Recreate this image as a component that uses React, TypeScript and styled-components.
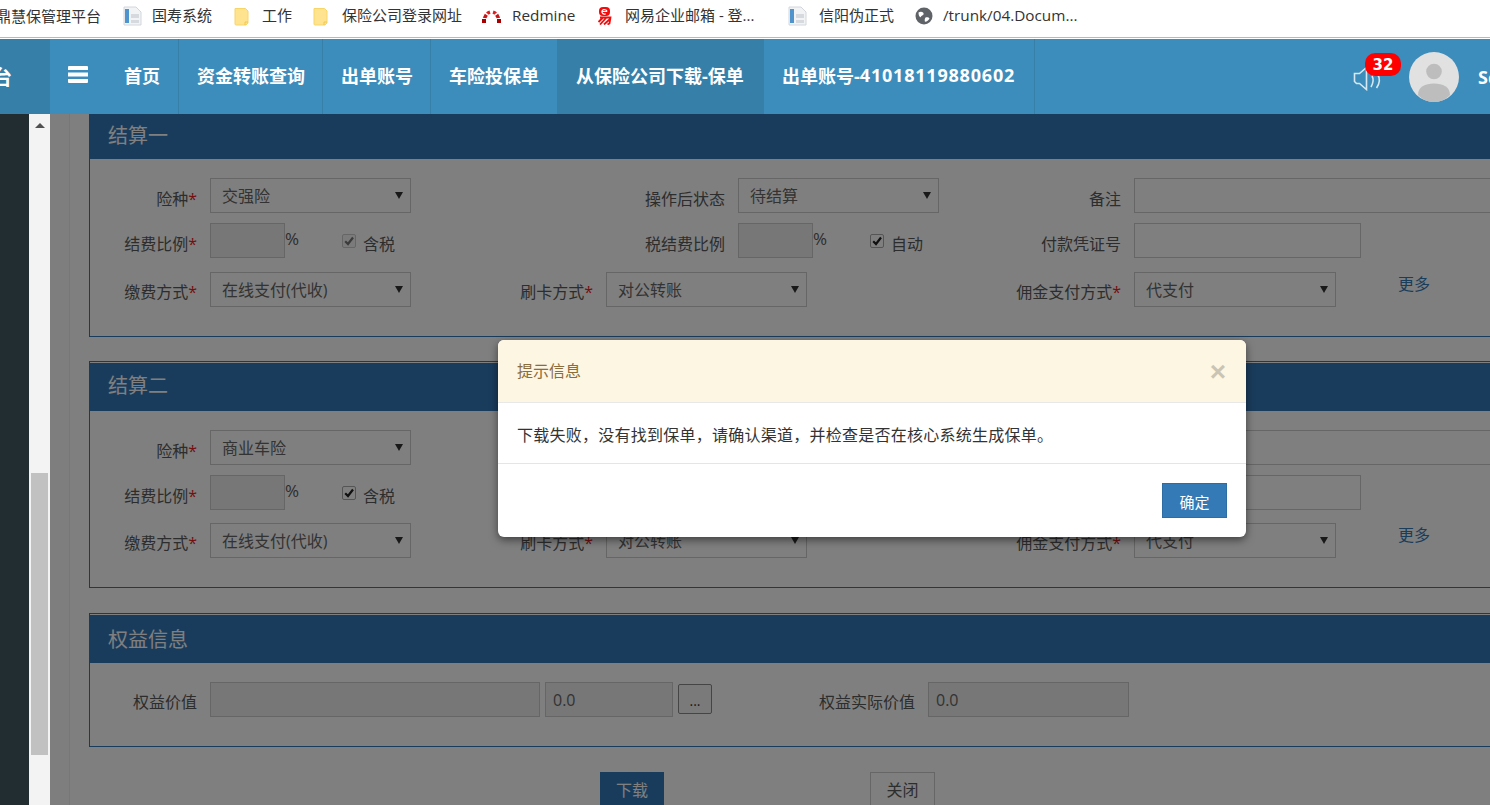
import React from "react";
import styled, { createGlobalStyle } from "styled-components";

const FONT = `"Open Sans", "Noto Sans CJK SC", sans-serif`;

const Global = createGlobalStyle`
  html, body { margin: 0; padding: 0; background: #fff; overflow: hidden; }
  * { box-sizing: border-box; }
  body { font-family: ${FONT}; }
`;

const Page = styled.div`
  width: 1490px;
  height: 805px;
  overflow: hidden;
  display: flex;
  flex-direction: column;
`;

/* Bookmarks */
const BookmarkBar = styled.div`
  height: 39px;
  flex: none;
  display: flex;
  align-items: center;
  padding: 0 0 7px 0;
  margin-left: -4px;
  background: #fff;
  position: relative;
  &::after {
    content: "";
    position: absolute;
    left: 0;
    right: 0;
    bottom: 1px;
    height: 1px;
    background: #b9b9b9;
  }
`;
const Bookmark = styled.div<{ $ml: number; $gap: number }>`
  display: flex;
  align-items: center;
  flex: none;
  margin-left: ${(p) => p.$ml}px;
  gap: ${(p) => p.$gap}px;
  color: #333;
  line-height: 20px;
  white-space: nowrap;
`;
const BookmarkText = styled.span<{ $w: number; $latin?: boolean }>`
  width: ${(p) => p.$w}px;
  display: block;
  overflow: hidden;
  white-space: nowrap;
  padding-bottom: 2px;
  font-size: ${(p) => (p.$latin ? 15.3 : 15)}px;
  color: #333;
`;

const DocIcon = () => (
  <svg width="20" height="20" viewBox="0 0 20 20">
    <path d="M1 1h12l5 5v13H1z" fill="#f1f3f5" stroke="#d2d6dc" strokeWidth="1" />
    <rect x="2" y="3" width="4" height="14" fill="#4f94cc" />
    <rect x="8" y="8" width="8" height="4" fill="#d6dade" />
    <rect x="8" y="14" width="8" height="3" fill="#d6dade" />
  </svg>
);
const FolderIcon = () => (
  <svg width="15" height="19" viewBox="0 0 15 19">
    <path d="M1 1.500h10.500L14 4v12l-2 2H2a1 1 0 0 1-1-1z" fill="#ffe38e" stroke="#f8d568" strokeWidth="1" />
    <path d="M11 18v-3h3" fill="none" stroke="#f0c850" strokeWidth="1" />
  </svg>
);
const RedmineIcon = () => (
  <svg width="21" height="15" viewBox="0 0 21 15">
    <rect x="1" y="10" width="4" height="4" fill="#a80000" />
    <rect x="16" y="10" width="4" height="4" fill="#a80000" />
    <path d="M1.800 8.800 L3.800 4.800 L6.800 6.800 L5.400 9.200z" fill="#c81414" />
    <path d="M19.200 8.800 L17.200 4.800 L14.200 6.800 L15.600 9.200z" fill="#c81414" />
    <path d="M5 3.600 Q6.500 2 8.500 1.500 L9.500 4.800 Q8.500 5 7.800 5.800z" fill="#e01e1e" />
    <path d="M16 3.600 Q14.500 2 12.500 1.500 L11.500 4.800 Q12.500 5 13.200 5.800z" fill="#e01e1e" />
  </svg>
);
const NeteaseIcon = () => (
  <svg width="16" height="18" viewBox="0 0 16 18">
    <rect x="2" y="0" width="11" height="9" rx="4" fill="#f40c0c" />
    <path d="M5 4.500h5M10 4.500a2.600 2.200 0 1 0-1.300 2.200" fill="none" stroke="#fff" strokeWidth="1.200" />
    <path d="M3 10.500h10.500l-1 6-2 1M6 10.500l-4.500 4.500M9.500 10.500l-6.500 7M13 12l-6 5.500" fill="none" stroke="#f40c0c" strokeWidth="1.800" />
  </svg>
);
const GlobeIcon = () => (
  <svg width="18" height="18" viewBox="0 0 18 18">
    <circle cx="9" cy="9" r="8.500" fill="#5f6368" />
    <path d="M3.500 5.500c1.500-1 3.500-1 4.500 0s.8 2.500-.8 3S6 11 5 10 3.500 7.500 3.500 5.500zM10.500 10.500c2-.5 3.500.3 4 1-1 2-2.500 3-4.500 3.300-.5-1.500-.3-3.300.5-4.300z" fill="#fff" />
  </svg>
);

const bookmarks: { icon: React.ReactNode; label: string; w: number; ml: number; gap: number; latin?: boolean }[] = [
  { icon: <DocIcon />, label: "国寿系统", w: 62, ml: 22, gap: 9 },
  { icon: <FolderIcon />, label: "工作", w: 32, ml: 20, gap: 13 },
  { icon: <FolderIcon />, label: "保险公司登录网址", w: 122, ml: 19, gap: 14 },
  { icon: <RedmineIcon />, label: "Redmine", w: 66, ml: 17, gap: 10, latin: true },
  { icon: <NeteaseIcon />, label: "网易企业邮箱 - 登...", w: 136, ml: 19, gap: 12 },
  { icon: <DocIcon />, label: "信阳伪正式", w: 76, ml: 27, gap: 11 },
  { icon: <GlobeIcon />, label: "/trunk/04.Docum...", w: 140, ml: 20, gap: 10, latin: true },
];

/* Header */
const Header = styled.header`
  height: 75px;
  flex: none;
  display: flex;
  background: #3c8dbc;
  color: #fff;
`;
const Logo = styled.div`
  width: 50px;
  flex: none;
  background: #367fa9;
  display: flex;
  align-items: center;
  justify-content: flex-end;
  overflow: hidden;
  padding-right: 38px;
  font-size: 20px;
  font-weight: 700;
  white-space: nowrap;
`;
const Toggle = styled.div`
  width: 56px;
  flex: none;
  display: flex;
  justify-content: center;
  padding-top: 27px;
`;
const NavItem = styled.div<{ $active?: boolean; $w: number }>`
  width: ${(p) => p.$w}px;
  flex: none;
  padding: 0 0 3px 18px;
  display: flex;
  align-items: center;
  font-size: 18px;
  font-weight: 700;
  white-space: nowrap;
  border-right: 1px solid ${(p) => (p.$active ? "transparent" : "#367fa9")};
  background: ${(p) => (p.$active ? "#367fa9" : "transparent")};
`;
const Digits = styled.span`
  letter-spacing: 0.8px;
`;
const HeaderRight = styled.div`
  margin-left: auto;
  width: 137px;
  flex: none;
  overflow: hidden;
  position: relative;
  display: flex;
  align-items: flex-start;
  padding-top: 13px;
`;
const Speaker = styled.div`
  width: 56px;
  flex: none;
  padding-top: 13px;
`;
const Badge = styled.span`
  position: absolute;
  left: 12px;
  top: 14px;
  width: 36px;
  height: 23px;
  border-radius: 10px;
  background: #f00;
  color: #fff;
  font: 700 15px/24px "DejaVu Sans", sans-serif;
  text-align: center;
`;
const Avatar = styled.div`
  width: 50px;
  height: 50px;
  flex: none;
`;
const UserName = styled.span`
  margin-left: 19px;
  font-size: 18px;
  font-weight: 700;
  line-height: 50px;
  white-space: nowrap;
`;

/* Body */
const Body = styled.div`
  flex: 1;
  min-height: 0;
  display: flex;
`;
const Sidebar = styled.div`
  width: 29px;
  flex: none;
  background: #222d32;
`;
const ScrollStrip = styled.div`
  width: 21px;
  flex: none;
  background: #f3f3f3;
  position: relative;
`;
const ScrollArrow = styled.span`
  position: absolute;
  left: 6px;
  top: 9px;
  width: 0;
  height: 0;
  border-left: 5px solid transparent;
  border-right: 5px solid transparent;
  border-bottom: 5px solid #505050;
`;
const ScrollThumb = styled.span`
  position: absolute;
  left: 2px;
  right: 2px;
  top: 359px;
  height: 282px;
  background: #c1c1c1;
`;
const Main = styled.main`
  flex: 1;
  min-width: 0;
  position: relative;
  overflow: hidden;
  background: #fff;
  display: flex;
`;
const Gutter = styled.div`
  width: 20px;
  flex: none;
  background: #fcfcfc;
  border-right: 1px solid #eee;
`;
const Content = styled.div`
  flex: none;
  width: 1500px;
  margin-top: -5px;
  padding-left: 19px;
`;
const Panel = styled.section<{ $mb: number }>`
  border: 1px solid #3578b8;
  padding-top: 1px;
  background: #fff;
  margin-bottom: ${(p) => p.$mb}px;
`;
const PanelHead = styled.h3<{ $lh?: number }>`
  margin: 0 -1px;
  height: 48px;
  padding-left: 19px;
  background: #3578b8;
  color: #fff;
  font-size: 20px;
  font-weight: 400;
  line-height: ${(p) => p.$lh ?? 50}px;
`;
const PanelBody = styled.div<{ $pb: number }>`
  padding: 19px 0 ${(p) => p.$pb}px 0;
  display: flex;
  flex-direction: column;
`;
const Row = styled.div<{ $mb?: number }>`
  display: flex;
  height: 35px;
  margin-bottom: ${(p) => p.$mb ?? 0}px;
`;
const FieldLabel = styled.label<{ $w: number; $top?: number }>`
  width: ${(p) => p.$w}px;
  flex: none;
  margin-right: 12px;
  padding-right: 1px;
  padding-top: ${(p) => p.$top ?? 9}px;
  text-align: right;
  font-size: 16px;
  line-height: 24px;
  color: #5a5a5a;
  white-space: nowrap;
`;
const Req = styled.i`
  font-style: normal;
  color: #e81c1c;
`;
const SelectBox = styled.div<{ $w?: number }>`
  width: ${(p) => p.$w ?? 201}px;
  height: 35px;
  flex: none;
  border: 1px solid #ccc;
  background: #fff;
  position: relative;
  padding-left: 11px;
  font-size: 16px;
  line-height: 34px;
  color: #666;
  &::after {
    content: "";
    position: absolute;
    right: 7px;
    top: 13px;
    border-left: 4px solid transparent;
    border-right: 4px solid transparent;
    border-top: 7px solid #333;
  }
`;
const TextInput = styled.input<{ $w: number; $off?: boolean }>`
  width: ${(p) => p.$w}px;
  height: 35px;
  flex: none;
  margin: 0;
  border: 1px solid #ccc;
  border-radius: 0;
  padding: 0 7px;
  background: ${(p) => (p.$off ? "#eee" : "#fff")};
  font-family: ${FONT};
  font-size: 16px;
  color: #666;
  outline: none;
`;
const RatioGroup = styled.div`
  width: 201px;
  flex: none;
  display: flex;
`;
const Percent = styled.span`
  width: 57px;
  flex: none;
  font-size: 17px;
  line-height: 31px;
  color: #5a5a5a;
`;
const CheckLabel = styled.span`
  display: flex;
  gap: 7px;
  font-size: 16px;
  line-height: 24px;
  color: #5a5a5a;
  padding-top: 9px;
`;
const CheckMark = styled.span<{ $off?: boolean }>`
  width: 14px;
  height: 14px;
  margin-top: 2px;
  flex: none;
  border: 1px solid ${(p) => (p.$off ? "#ccc" : "#aaa")};
  border-radius: 2px;
  background: ${(p) => (p.$off ? "#f6f6f6" : "#fff")};
  display: flex;
  align-items: center;
  justify-content: center;
  color: ${(p) => (p.$off ? "#777" : "#222")};
`;
const MoreLink = styled.a`
  margin-left: 62px;
  font-size: 16px;
  line-height: 24px;
  color: #337ab7;
`;
const Spacer = styled.span`
  width: 5px;
  flex: none;
`;
const DotsButton = styled.button`
  width: 34px;
  height: 30px;
  margin: 2px 0 0 5px;
  flex: none;
  border: 1px solid #8a8a8a;
  border-radius: 2px;
  background: #f5f5f5;
  color: #333;
  font-family: ${FONT};
  font-size: 14px;
  padding: 2px 0 0;
`;
const Actions = styled.div`
  display: flex;
  padding-left: 511px;
  gap: 206px;
`;
const ActionButton = styled.button<{ $primary?: boolean }>`
  width: ${(p) => (p.$primary ? 64 : 65)}px;
  height: 38px;
  flex: none;
  border: 1px solid ${(p) => (p.$primary ? "#3578b8" : "#ccc")};
  background: ${(p) => (p.$primary ? "#3578b8" : "#fff")};
  color: ${(p) => (p.$primary ? "#fff" : "#5a5a5a")};
  font-family: ${FONT};
  font-size: 16px;
  padding: 0 0 5px;
`;

/* Modal */
const Backdrop = styled.div`
  position: absolute;
  inset: 0;
  background: rgba(0, 0, 0, 0.5);
`;
const Modal = styled.div`
  position: absolute;
  left: 448px;
  top: 226px;
  width: 748px;
  height: 197px;
  background: #fff;
  border-radius: 6px;
  overflow: hidden;
  box-shadow: 0 3px 9px rgba(0, 0, 0, 0.5);
  display: flex;
  flex-direction: column;
`;
const ModalHead = styled.div`
  height: 63px;
  flex: none;
  background: #fdf6e3;
  border-bottom: 1px solid #e8e8e8;
  display: flex;
  align-items: center;
  justify-content: space-between;
  padding: 0 19px 2px;
  color: #8a6d3b;
  font-size: 16px;
`;
const CloseGlyph = styled.span`
  font: 700 28px/28px "Liberation Sans", sans-serif;
  color: #000;
  opacity: 0.2;
  margin: 3px 1px 0 0;
`;
const ModalBody = styled.div`
  height: 61px;
  flex: none;
  padding: 2px 19px 0;
  border-bottom: 1px solid #e5e5e5;
  display: flex;
  align-items: center;
  font-size: 16px;
  letter-spacing: 0.25px;
  color: #333;
`;
const ModalFoot = styled.div`
  flex: 1;
  display: flex;
  justify-content: flex-end;
  padding: 19px 19px 0 0;
`;
const ConfirmButton = styled.button`
  width: 65px;
  height: 35px;
  border: 1px solid #2e6da4;
  background: #337ab7;
  color: #fff;
  font-family: ${FONT};
  font-size: 15px;
  padding: 2px 0 0;
`;

const Check = () => (
  <svg width="10" height="10" viewBox="0 0 10 10">
    <path d="M1.200 5.200 4 8l5-6.500" fill="none" stroke="currentColor" strokeWidth="2.200" />
  </svg>
);

type SettlementProps = {
  title: string;
  kind: string;
  taxOff?: boolean;
  mb: number;
  pb: number;
  secondGap: number;
  headLh?: number;
};

const Settlement = ({ title, kind, taxOff, mb, pb, secondGap, headLh }: SettlementProps) => (
  <Panel $mb={mb}>
    <PanelHead $lh={headLh}>{title}</PanelHead>
    <PanelBody $pb={pb}>
      <Row $mb={10}>
        <FieldLabel $w={108}>
          险种<Req>*</Req>
        </FieldLabel>
        <SelectBox>{kind}</SelectBox>
        <FieldLabel $w={315}>操作后状态</FieldLabel>
        <SelectBox>待结算</SelectBox>
        <FieldLabel $w={183}>备注</FieldLabel>
        <TextInput $w={400} />
      </Row>
      <Row $mb={secondGap}>
        <FieldLabel $w={108}>
          结费比例<Req>*</Req>
        </FieldLabel>
        <RatioGroup>
          <TextInput $w={75} $off disabled />
          <Percent>%</Percent>
          <CheckLabel>
            <CheckMark $off={taxOff}>
              <Check />
            </CheckMark>
            含税
          </CheckLabel>
        </RatioGroup>
        <FieldLabel $w={315}>税结费比例</FieldLabel>
        <RatioGroup>
          <TextInput $w={75} $off disabled />
          <Percent>%</Percent>
          <CheckLabel>
            <CheckMark>
              <Check />
            </CheckMark>
            自动
          </CheckLabel>
        </RatioGroup>
        <FieldLabel $w={183}>付款凭证号</FieldLabel>
        <TextInput $w={227} />
      </Row>
      <Row>
        <FieldLabel $w={108} $top={8}>
          缴费方式<Req>*</Req>
        </FieldLabel>
        <SelectBox>在线支付(代收)</SelectBox>
        <FieldLabel $w={183} $top={8}>
          刷卡方式<Req>*</Req>
        </FieldLabel>
        <SelectBox>对公转账</SelectBox>
        <FieldLabel $w={315} $top={8}>
          佣金支付方式<Req>*</Req>
        </FieldLabel>
        <SelectBox $w={202}>代支付</SelectBox>
        <MoreLink>更多</MoreLink>
      </Row>
    </PanelBody>
  </Panel>
);

export default function App() {
  return (
    <Page>
      <Global />
      <BookmarkBar>
        <BookmarkText $w={105}>鼎慧保管理平台</BookmarkText>
        {bookmarks.map((b) => (
          <Bookmark key={b.label} $ml={b.ml} $gap={b.gap}>
            {b.icon}
            <BookmarkText $w={b.w} $latin={b.latin}>
              {b.label}
            </BookmarkText>
          </Bookmark>
        ))}
      </BookmarkBar>
      <Header>
        <Logo>鼎慧保管理平台</Logo>
        <Toggle>
          <svg width="20" height="17" viewBox="0 0 20 17">
            <path d="M1 0h18a1 1 0 0 1 1 1v3H0V1a1 1 0 0 1 1-1zM0 6.500h20v4H0zM0 13h20v3a1 1 0 0 1-1 1H1a1 1 0 0 1-1-1z" fill="#fff" />
          </svg>
        </Toggle>
        <NavItem $w={73}>首页</NavItem>
        <NavItem $w={144}>资金转账查询</NavItem>
        <NavItem $w={108}>出单账号</NavItem>
        <NavItem $w={127}>车险投保单</NavItem>
        <NavItem $w={206} $active>
          从保险公司下载-保单
        </NavItem>
        <NavItem $w={271}>
          出单账号-<Digits>41018119880602</Digits>
        </NavItem>
        <HeaderRight>
          <Speaker>
            <svg width="30" height="26" viewBox="0 0 30 26" fill="none" stroke="#d6e8f2" strokeWidth="1.600">
              <path d="M1.500 8.500h5l7-6v22l-7-6h-3l-2-2z" />
              <path d="M19 11c1.500 2.500 1.200 7-1 11" />
              <path d="M24.500 9c2.500 4 2.500 9-1 14" />
            </svg>
          </Speaker>
          <Badge>32</Badge>
          <Avatar>
            <svg width="50" height="50" viewBox="0 0 50 50">
              <circle cx="25" cy="25" r="25" fill="#e1e1e1" />
              <circle cx="25" cy="19.500" r="7.800" fill="#bdbdbd" />
              <path d="M9 43c0-8 7-11.500 16-11.500S41 35 41 43c-4 4.500-10 7-16 7s-12-2.500-16-7z" fill="#bdbdbd" />
            </svg>
          </Avatar>
          <UserName>Scott</UserName>
        </HeaderRight>
      </Header>
      <Body>
        <Sidebar />
        <ScrollStrip>
          <ScrollArrow />
          <ScrollThumb />
        </ScrollStrip>
        <Main>
          <Gutter />
          <Content>
            <Settlement title="结算一" kind="交强险" taxOff mb={24} pb={29} secondGap={14} />
            <Settlement title="结算二" kind="商业车险" mb={25} pb={29} secondGap={13} headLh={46} />
            <Panel $mb={25}>
              <PanelHead>权益信息</PanelHead>
              <PanelBody $pb={29}>
                <Row>
                  <FieldLabel $w={108} $top={8}>
                    权益价值
                  </FieldLabel>
                  <TextInput $w={330} $off disabled />
                  <Spacer />
                  <TextInput $w={128} $off disabled defaultValue="0.0" />
                  <DotsButton>...</DotsButton>
                  <FieldLabel $w={204} $top={8}>
                    权益实际价值
                  </FieldLabel>
                  <TextInput $w={201} $off disabled defaultValue="0.0" />
                </Row>
              </PanelBody>
            </Panel>
            <Actions>
              <ActionButton $primary>下载</ActionButton>
              <ActionButton>关闭</ActionButton>
            </Actions>
          </Content>
          <Backdrop />
          <Modal>
            <ModalHead>
              提示信息
              <CloseGlyph>×</CloseGlyph>
            </ModalHead>
            <ModalBody>下载失败，没有找到保单，请确认渠道，并检查是否在核心系统生成保单。</ModalBody>
            <ModalFoot>
              <ConfirmButton>确定</ConfirmButton>
            </ModalFoot>
          </Modal>
        </Main>
      </Body>
    </Page>
  );
}
